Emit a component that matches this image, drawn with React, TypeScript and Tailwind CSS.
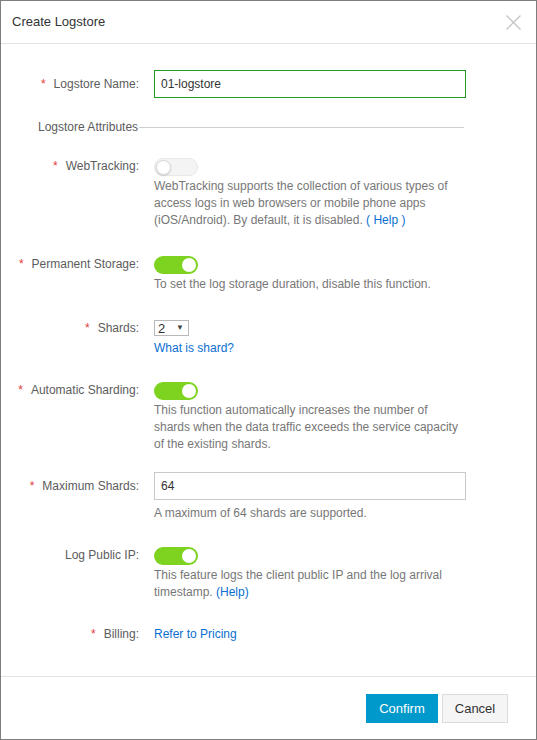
function Toggle({ on }: { on: boolean }) {
  if (on) {
    return (
      <div className="flex h-[18px] w-[44px] items-center justify-end rounded-full bg-[#7ed321] pr-[2px]">
        <div className="h-[14px] w-[14px] rounded-full bg-white" />
      </div>
    )
  }
  return (
    <div className="flex h-[18px] w-[44px] items-center rounded-full border border-[#e8e8e8] bg-[#f4f4f4] pl-px">
      <div className="h-[15px] w-[15px] rounded-full border border-[#d6d6d6] bg-white shadow-[0_1px_2px_rgba(0,0,0,0.15)]" />
    </div>
  )
}

function Label({ text, required, lh }: { text: string; required?: boolean; lh: string }) {
  return (
    <div className={`w-[138px] shrink-0 text-right text-[#5c5c5c] ${lh}`}>
      {required && <span className="mr-[8px] text-[#e4393c]">*</span>}
      {text}
    </div>
  )
}

function Desc({ children }: { children: React.ReactNode }) {
  return <p className="mt-[2px] text-[#777] leading-[17px]">{children}</p>
}

export default function App() {
  return (
    <div className="flex h-[740px] w-[537px] flex-col border border-[#7d7d7d] bg-white text-[12px] font-['Liberation_Sans',Arial,sans-serif]">
      {/* Header */}
      <div className="flex h-[43px] shrink-0 items-center justify-between border-b border-[#e3e3e3] pl-[11px] pr-[14px]">
        <span className="text-[13px] text-[#333]">Create Logstore</span>
        <svg width="15" height="15" viewBox="0 0 15 15" className="mr-px">
          <path d="M0.5 0.5L14.5 14.5M14.5 0.5L0.5 14.5" stroke="#c6c6c6" strokeWidth="1.4" />
        </svg>
      </div>

      {/* Body */}
      <div className="flex-1">
        {/* Logstore Name */}
        <div className="mt-[26px] flex">
          <Label text="Logstore Name:" required lh="leading-[28px]" />
          <div className="ml-[15px] flex h-[28px] w-[312px] items-center border border-[#1f9e1f] px-[6px] text-[#333]">
            01-logstore
          </div>
        </div>

        {/* Attributes divider */}
        <div className="ml-[37px] mt-[21px] flex w-[426px] items-center leading-[17px]">
          <span className="text-[#5c5c5c]">Logstore Attributes</span>
          <div className="ml-px h-px flex-1 bg-[#cfcfcf]" />
        </div>

        {/* WebTracking */}
        <div className="mt-[22px] flex">
          <Label text="WebTracking:" required lh="leading-[16px]" />
          <div className="ml-[15px] w-[312px]">
            <Toggle on={false} />
            <Desc>
              WebTracking supports the collection of various types of access logs in web browsers or mobile phone apps
              (iOS/Android). By default, it is disabled. <a className="text-[#0a6fd1]">( Help )</a>
            </Desc>
          </div>
        </div>

        {/* Permanent Storage */}
        <div className="mt-[27px] flex">
          <Label text="Permanent Storage:" required lh="leading-[16px]" />
          <div className="ml-[15px] w-[312px]">
            <Toggle on />
            <Desc>To set the log storage duration, disable this function.</Desc>
          </div>
        </div>

        {/* Shards */}
        <div className="mt-[27px] flex">
          <Label text="Shards:" required lh="leading-[16px]" />
          <div className="ml-[15px] w-[312px]">
            <div className="flex h-[16px] w-[35px] items-center justify-between border border-[#b9b9b9] pl-[3px] pr-[4px] text-[13px] leading-none text-[#333]">
              <span>2</span>
              <span className="text-[8px] text-[#444]">▼</span>
            </div>
            <p className="mt-[4px] leading-[17px] text-[#0a6fd1]">What is shard?</p>
          </div>
        </div>

        {/* Automatic Sharding */}
        <div className="mt-[25px] flex">
          <Label text="Automatic Sharding:" required lh="leading-[16px]" />
          <div className="ml-[15px] w-[312px]">
            <Toggle on />
            <Desc>
              This function automatically increases the number of shards when the data traffic exceeds the service capacity
              of the existing shards.
            </Desc>
          </div>
        </div>

        {/* Maximum Shards */}
        <div className="mt-[19px] flex">
          <Label text="Maximum Shards:" required lh="leading-[28px]" />
          <div className="ml-[15px] w-[312px]">
            <div className="flex h-[28px] items-center border border-[#c9c9c9] px-[6px] text-[#333]">64</div>
            <p className="mt-[5px] leading-[17px] text-[#777]">A maximum of 64 shards are supported.</p>
          </div>
        </div>

        {/* Log Public IP */}
        <div className="mt-[25px] flex">
          <Label text="Log Public IP:" lh="leading-[16px]" />
          <div className="ml-[15px] w-[312px]">
            <Toggle on />
            <Desc>
              This feature logs the client public IP and the log arrival timestamp.{' '}
              <a className="text-[#0a6fd1]">(Help)</a>
            </Desc>
          </div>
        </div>

        {/* Billing */}
        <div className="mt-[25px] flex leading-[17px]">
          <Label text="Billing:" required lh="leading-[17px]" />
          <a className="ml-[15px] text-[#0a6fd1]">Refer to Pricing</a>
        </div>
      </div>

      {/* Footer */}
      <div className="flex h-[63px] shrink-0 items-start justify-end gap-[4px] border-t border-[#e3e3e3] pr-[28px] pt-[17px]">
        <button className="h-[29px] w-[72px] bg-[#0099cc] text-[13px] text-white">Confirm</button>
        <button className="h-[29px] w-[66px] border border-[#dcdcdc] bg-[#f5f5f5] text-[13px] text-[#333]">Cancel</button>
      </div>
    </div>
  )
}
